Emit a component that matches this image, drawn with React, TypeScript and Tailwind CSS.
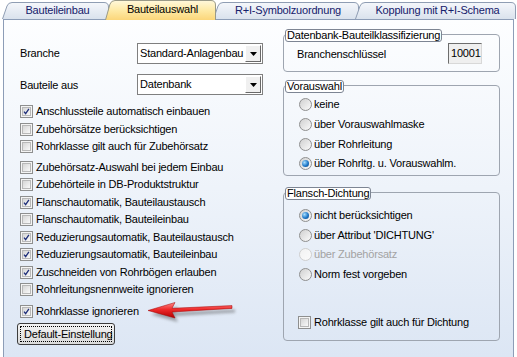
import React from 'react';

type TabProps = { label: string; w: number; active?: boolean; className: string; id: string };

function Tab({ label, w, active, className, id }: TabProps) {
  const h = active ? 20 : 17;
  const d = `M0.5 ${h} L5 4 Q6.3 0.5 10 0.5 L${w - 5} 0.5 Q${w - 0.5} 0.5 ${w - 0.5} 5 L${w - 0.5} ${h}`;
  return (
    <div className={`relative shrink-0 flex items-center justify-center ${className}`}>
      <svg className="absolute inset-0" width={w} height={h} viewBox={`0 0 ${w} ${h}`}>
        <defs>
          <linearGradient id={id} x1="0" y1="0" x2="0" y2="1">
            {active ? (
              <>
                <stop offset="0" stopColor="#fff8dc" />
                <stop offset="0.5" stopColor="#feeaa6" />
                <stop offset="1" stopColor="#fbd67a" />
              </>
            ) : (
              <>
                <stop offset="0" stopColor="#f5f7fb" />
                <stop offset="1" stopColor="#dae2ed" />
              </>
            )}
          </linearGradient>
        </defs>
        <path d={`${d} Z`} fill={`url(#${id})`} />
        <path d={d} fill="none" stroke={active ? '#9a9a88' : '#8f9db3'} strokeWidth="1" />
      </svg>
      <span className={`relative pl-[4px] ${active ? 'text-black pb-[2px]' : 'text-[#15206b] pb-[1px]'}`}>{label}</span>
    </div>
  );
}

function Check({ label, checked, className = '' }: { label: string; checked?: boolean; className?: string }) {
  return (
    <div className={`flex items-center h-[17.5px] gap-[3px] ${className}`}>
      <span className="w-[13px] h-[13px] shrink-0 border border-[#8e8f8f] bg-[#f4f4f4] p-[1px]">
        <span className="flex items-center justify-center w-full h-full border border-[#b8b8b8] bg-gradient-to-br from-[#d6d6d6] to-[#f9f9f9]">
          {checked && (
            <svg width="9" height="9" viewBox="0 0 9 9">
              <path d="M1.3 4.6 L3.4 7.2 L7.6 1.2" fill="none" stroke="#1f2f7a" strokeWidth="1.7" />
            </svg>
          )}
        </span>
      </span>
      <span className="whitespace-nowrap">{label}</span>
    </div>
  );
}

function Radio({ label, checked, disabled }: { label: string; checked?: boolean; disabled?: boolean }) {
  return (
    <div className={`flex items-center gap-[2px] ${disabled ? 'text-[#a3a3a3]' : ''}`}>
      <span
        className={`w-[13px] h-[13px] shrink-0 rounded-full border flex items-center justify-center bg-gradient-to-br ${
          disabled ? 'border-[#cfcfcf] from-[#f2f2f2] to-[#fbfbfb]' : 'border-[#8f8f8f] from-[#d0d0d0] to-[#fbfbfb]'
        }`}
      >
        {checked && (
          <span className="w-[7px] h-[7px] rounded-full bg-[radial-gradient(circle_at_35%_35%,#a9e0ff,#1f78c8_55%,#0b3f7a)]" />
        )}
      </span>
      <span className="whitespace-nowrap">{label}</span>
    </div>
  );
}

function Select({ value }: { value: string }) {
  return (
    <div className="flex h-[21px] w-[126px] border border-[#7f7f7f] bg-white">
      <span className="flex-1 flex items-center pl-[2px] overflow-hidden whitespace-nowrap">{value}</span>
      <span className="w-[16px] shrink-0 m-[1px] flex items-center justify-center bg-[#f0f0f0] border border-t-white border-l-white border-r-[#696969] border-b-[#696969]">
        <svg width="7" height="4" viewBox="0 0 7 4">
          <path d="M0 0 H7 L3.5 4 Z" fill="#000" />
        </svg>
      </span>
    </div>
  );
}

function Group({ title, className, children }: { title: string; className: string; children: React.ReactNode }) {
  return (
    <div className={`relative border border-[#9ea5b0] rounded-[4px] ${className}`}>
      <span className="absolute left-[1px] -top-[6px] h-[13px] px-[1px] border border-[#7d8593] rounded-[3px] bg-white leading-[11px] whitespace-nowrap">
        {title}
      </span>
      {children}
    </div>
  );
}

export default function App() {
  return (
    <div className="w-[517px] h-[357px] bg-white relative overflow-hidden font-['Liberation_Sans',Arial,sans-serif] text-[11px] leading-[13px] tracking-[-0.2px] text-black">
      {/* Tabs */}
      <div className="relative z-10 flex items-end h-[19px]">
        <Tab id="t1" label="Bauteileinbau" w={107} className="ml-[2px] w-[107px] h-[17px]" />
        <Tab id="t2" label="Bauteilauswahl" w={111} active className="-ml-[4px] w-[111px] h-[20px] -mb-px z-20" />
        <Tab id="t3" label="R+I-Symbolzuordnung" w={146} className="-ml-[3px] w-[146px] h-[17px]" />
        <Tab id="t4" label="Kopplung mit R+I-Schema" w={161} className="-ml-[4px] w-[161px] h-[17px] z-[5]" />
      </div>

      {/* Panel */}
      <div className="relative ml-[3px] w-[511px] h-[338px] border border-b-0 border-[#8d9db7] bg-gradient-to-b from-[#fdfeff] via-[#eef3fa] to-[#dce6f4] flex">
        <div className="w-[279px] shrink-0 pl-[16px] pt-[23px] flex flex-col">
          <div className="flex items-center">
            <span className="w-[117px]">Branche</span>
            <Select value="Standard-Anlagenbau" />
          </div>
          <div className="flex items-center mt-[10px]">
            <span className="w-[117px] pt-[2px]">Bauteile aus</span>
            <Select value="Datenbank" />
          </div>
          <div className="mt-[8px]">
            <Check label="Anschlussteile automatisch einbauen" checked />
            <Check label="Zubehörsätze berücksichtigen" />
            <Check label="Rohrklasse gilt auch für Zubehörsatz" />
            <Check label="Zubehörsatz-Auswahl bei jedem Einbau" className="mt-[3px]" />
            <Check label="Zubehörteile in DB-Produktstruktur" />
            <Check label="Flanschautomatik, Bauteilaustausch" checked />
            <Check label="Flanschautomatik, Bauteileinbau" />
            <Check label="Reduzierungsautomatik, Bauteilaustausch" checked />
            <Check label="Reduzierungsautomatik, Bauteileinbau" checked />
            <Check label="Zuschneiden von Rohrbögen erlauben" checked />
            <Check label="Rohrleitungsnennweite ignorieren" />
            <Check label="Rohrklasse ignorieren" checked className="mt-[4px]" />
          </div>
          <button className="mt-[3px] -ml-[3px] w-[98px] h-[22px] p-[2px] border border-[#3c3c3c] rounded-[3px] bg-gradient-to-b from-[#f4f4f4] to-[#dadada] text-left">
            <span className="flex items-center h-full pl-[3px] border border-dotted border-black whitespace-nowrap">Default-Einstellung</span>
          </button>
        </div>

        <div className="w-[217px] shrink-0 pt-[14px] flex flex-col">
          <Group title="Datenbank-Bauteilklassifizierung" className="h-[38px] flex items-start pt-[8px] pl-[13px] pr-[17px]">
            <span className="mt-[5px]">Branchenschlüssel</span>
            <span className="ml-auto w-[34px] h-[21px] flex items-center pl-[2px] bg-[#efefef] border border-t-[#6d6d6d] border-l-[#6d6d6d] border-r-[#d8d8d8] border-b-[#d8d8d8]">
              10001
            </span>
          </Group>

          <Group title="Vorauswahl" className="mt-[13px] h-[91px] pt-[9px] pl-[15px]">
            <div className="flex flex-col">
              <div className="h-[19.7px] flex items-center"><Radio label="keine" /></div>
              <div className="h-[19.7px] flex items-center"><Radio label="über Vorauswahlmaske" /></div>
              <div className="h-[19.7px] flex items-center"><Radio label="über Rohrleitung" /></div>
              <div className="h-[19.7px] flex items-center"><Radio label="über Rohrltg. u. Vorauswahlm." checked /></div>
            </div>
          </Group>

          <Group title="Flansch-Dichtung" className="mt-[16px] h-[149px] pt-[13px] pl-[15px]">
            <div className="flex flex-col">
              <div className="h-[19.5px] flex items-center"><Radio label="nicht berücksichtigen" checked /></div>
              <div className="h-[19.5px] flex items-center"><Radio label="über Attribut 'DICHTUNG'" /></div>
              <div className="h-[19.5px] flex items-center"><Radio label="über Zubehörsatz" disabled /></div>
              <div className="h-[19.5px] flex items-center"><Radio label="Norm fest vorgeben" /></div>
            </div>
            <Check label="Rohrklasse gilt auch für Dichtung" className="mt-[30px] -ml-px" />
          </Group>
        </div>

        {/* red annotation arrow */}
        <svg className="absolute left-[138px] top-[276px]" width="100" height="30" viewBox="0 0 100 30">
          <defs>
            <linearGradient id="arrowFill" x1="0" y1="0" x2="0" y2="1">
              <stop offset="0" stopColor="#ff8a8a" />
              <stop offset="0.45" stopColor="#ee2a2a" />
              <stop offset="1" stopColor="#b30000" />
            </linearGradient>
            <filter id="arrowShadow" x="-20%" y="-50%" width="140%" height="200%">
              <feGaussianBlur stdDeviation="1.6" />
            </filter>
          </defs>
          <path d="M6 14.5 L33 6.5 L30 12.3 L90 9.6 L90 12.4 L30 16 L33 22 Z" fill="#4a4a4a" opacity="0.45" transform="translate(3 4)" filter="url(#arrowShadow)" />
          <path d="M6 14.5 L33 6.5 L30 12.3 L90 9.6 L90 12.4 L30 16 L33 22 Z" fill="url(#arrowFill)" stroke="#a00000" strokeWidth="0.5" />
        </svg>
      </div>
    </div>
  );
}
